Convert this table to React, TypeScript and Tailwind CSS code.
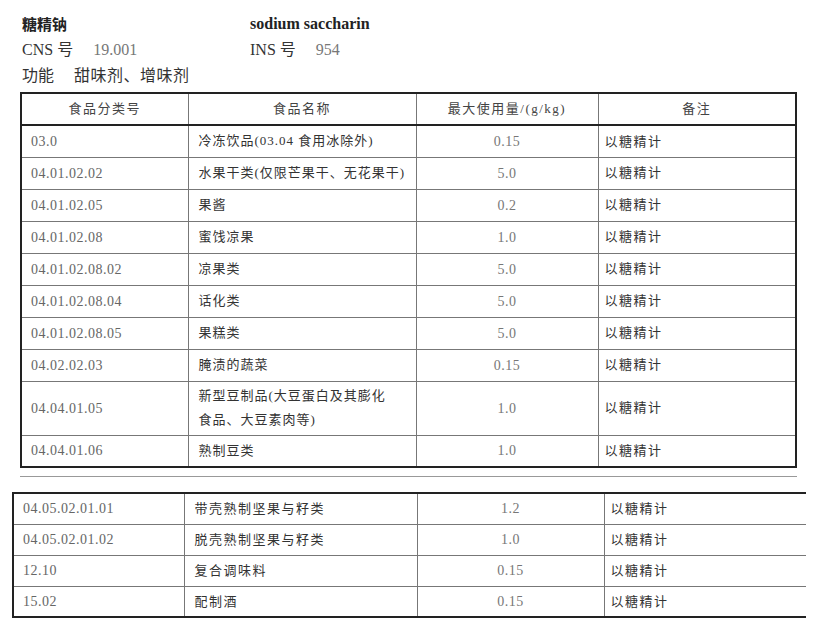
import React from "react";

const FONT = "font-['Liberation_Serif','Noto_Sans_CJK_SC',serif]";

type Row = { code: string; name: React.ReactNode; amt: string; note: string; tall?: boolean };

const rows1: Row[] = [
  { code: "03.0", name: "冷冻饮品(03.04 食用冰除外)", amt: "0.15", note: "以糖精计" },
  { code: "04.01.02.02", name: "水果干类(仅限芒果干、无花果干)", amt: "5.0", note: "以糖精计" },
  { code: "04.01.02.05", name: "果酱", amt: "0.2", note: "以糖精计" },
  { code: "04.01.02.08", name: "蜜饯凉果", amt: "1.0", note: "以糖精计" },
  { code: "04.01.02.08.02", name: "凉果类", amt: "5.0", note: "以糖精计" },
  { code: "04.01.02.08.04", name: "话化类", amt: "5.0", note: "以糖精计" },
  { code: "04.01.02.08.05", name: "果糕类", amt: "5.0", note: "以糖精计" },
  { code: "04.02.02.03", name: "腌渍的蔬菜", amt: "0.15", note: "以糖精计" },
  {
    code: "04.04.01.05",
    name: (
      <>
        新型豆制品(大豆蛋白及其膨化
        <br />
        食品、大豆素肉等)
      </>
    ),
    amt: "1.0",
    note: "以糖精计",
    tall: true,
  },
  { code: "04.04.01.06", name: "熟制豆类", amt: "1.0", note: "以糖精计" },
];

const rows2: Row[] = [
  { code: "04.05.02.01.01", name: "带壳熟制坚果与籽类", amt: "1.2", note: "以糖精计" },
  { code: "04.05.02.01.02", name: "脱壳熟制坚果与籽类", amt: "1.0", note: "以糖精计" },
  { code: "12.10", name: "复合调味料", amt: "0.15", note: "以糖精计" },
  { code: "15.02", name: "配制酒", amt: "0.15", note: "以糖精计" },
];

export default function App() {
  return (
    <div className={`w-[816px] h-[639px] bg-white overflow-hidden ${FONT}`}>
      {/* Heading block */}
      <div className="pt-[11px] pl-[22px] text-[16px] leading-[26px] text-[#333]">
        <div className="flex">
          <div className="w-[228px] font-bold font-['Noto_Sans_CJK_SC',sans-serif] text-[15px] text-[#222]">糖精钠</div>
          <div className="font-bold text-[16px] text-[#222]">sodium saccharin</div>
        </div>
        <div className="flex">
          <div className="w-[228px]">
            CNS 号<span className="ml-[20px] text-[#777]">19.001</span>
          </div>
          <div>
            INS 号<span className="ml-[20px] text-[#777]">954</span>
          </div>
        </div>
        <div>
          功能<span className="ml-[20px] tracking-[0.5px]">甜味剂、增味剂</span>
        </div>
      </div>

      {/* Table 1 */}
      <div className="ml-[20px] mt-[3px] w-[777px]">
        <table className="w-full table-fixed border-collapse border-2 border-[#222]">
          <colgroup>
            <col className="w-[167px]" />
            <col className="w-[228px]" />
            <col className="w-[182px]" />
            <col />
          </colgroup>
          <thead>
            <tr className="h-[32px] border-b-2 border-[#222] text-[13px] tracking-[1.5px] text-[#444]">
              <th className="font-normal border-r border-[#777]">食品分类号</th>
              <th className="font-normal border-r border-[#777]">食品名称</th>
              <th className="font-normal border-r border-[#777]">最大使用量/(g/kg)</th>
              <th className="font-normal">备注</th>
            </tr>
          </thead>
          <tbody>
            {rows1.map((r, i) => (
              <tr key={i} className={`${r.tall ? "h-[54px]" : "h-[32px]"} border-t border-[#777]`}>
                <td className="pl-[9px] border-r border-[#777] text-[14px] tracking-[0.5px] text-[#666]">{r.code}</td>
                <td className="pl-[10px] border-r border-[#777] text-[13px] tracking-[1px] leading-[24px] text-[#333]">{r.name}</td>
                <td className="text-center border-r border-[#777] text-[14px] tracking-[0.5px] text-[#777]">{r.amt}</td>
                <td className="pl-[6px] text-[13px] tracking-[1.5px] text-[#333]">{r.note}</td>
              </tr>
            ))}
          </tbody>
        </table>
      </div>

      {/* Separator */}
      <div className="ml-[20px] mt-[8px] w-[777px] h-px bg-[#999]" />

      {/* Table 2 */}
      <div className="ml-[12px] mt-[15px] w-[794px]">
        <table className="w-full table-fixed border-collapse border-y-2 border-l-2 border-[#222]">
          <colgroup>
            <col className="w-[171px]" />
            <col className="w-[233px]" />
            <col className="w-[187px]" />
            <col />
          </colgroup>
          <tbody>
            {rows2.map((r, i) => (
              <tr key={i} className={`h-[31px] ${i > 0 ? "border-t border-[#777]" : ""}`}>
                <td className="pl-[9px] border-r border-[#777] text-[14px] tracking-[0.5px] text-[#666]">{r.code}</td>
                <td className="pl-[10px] border-r border-[#777] text-[13px] tracking-[1.5px] text-[#333]">{r.name}</td>
                <td className="text-center border-r border-[#777] text-[14px] tracking-[0.5px] text-[#777]">{r.amt}</td>
                <td className="pl-[6px] text-[13px] tracking-[1.5px] text-[#333]">{r.note}</td>
              </tr>
            ))}
          </tbody>
        </table>
      </div>
    </div>
  );
}
